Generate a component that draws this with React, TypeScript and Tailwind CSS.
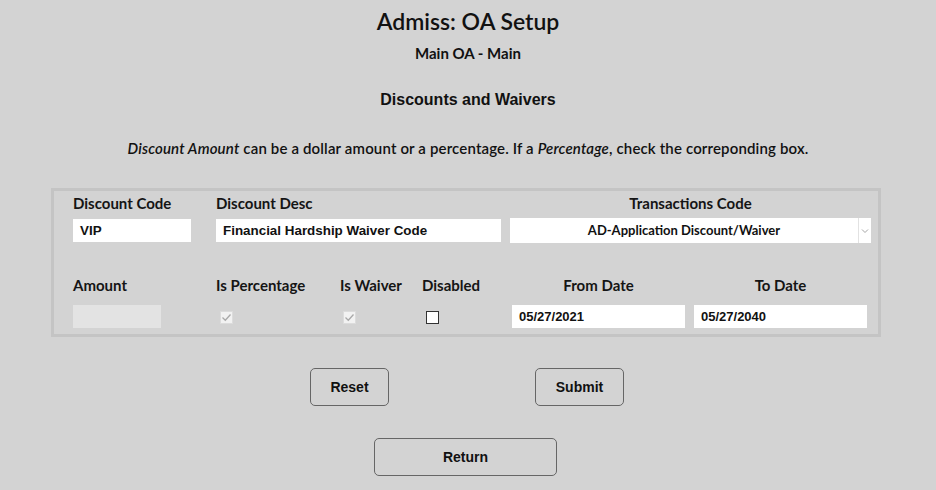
import React from 'react'

const geo = "font-['Lato','Noto_Sans',sans-serif]"
const arial = "font-['Liberation_Sans',Arial,sans-serif]"

function Label({ children, className = '' }: { children: React.ReactNode; className?: string }) {
  return (
    <div className={`${geo} text-[15px] leading-[20px] font-bold text-[#151515] ${className}`}>
      {children}
    </div>
  )
}

function TextBox({ value, className = '' }: { value: string; className?: string }) {
  return (
    <div
      className={`${arial} h-[23px] bg-white px-[7px] text-[13.4px] leading-[23px] font-bold text-[#111] ${className}`}
    >
      {value}
    </div>
  )
}

function DisabledCheck({ className = '' }: { className?: string }) {
  return (
    <span
      className={`flex h-[13px] w-[13px] items-center justify-center border border-[#dcdcdc] bg-[#f2f2f2] ${className}`}
    >
      <svg width="11" height="11" viewBox="0 0 11 11">
        <path d="M1.5 5.5 L4.3 8.2 L9.5 2.5" fill="none" stroke="#a9a9a9" strokeWidth="1.3" />
      </svg>
    </span>
  )
}

export default function App() {
  return (
    <div className="min-h-[490px] w-[936px] bg-[#d3d3d3] text-[#111]">
      <div className={`${geo} pt-[7px] text-center text-[23px] leading-[28px] font-semibold`}>
        Admiss: OA Setup
      </div>
      <div className={`${geo} mt-[8px] text-center text-[15px] leading-[20px] font-bold`}>
        Main OA - Main
      </div>
      <div className={`${arial} mt-[27px] text-center text-[16px] leading-[20px] font-bold`}>
        Discounts and Waivers
      </div>
      <div
        className={`${geo} mt-[28px] text-center text-[15px] leading-[20px] font-semibold tracking-[0.15px]`}
      >
        <i>Discount Amount</i> can be a dollar amount or a percentage. If a <i>Percentage</i>, check
        the correponding box.
      </div>

      <div className="mt-[30px] ml-[51px] w-[830px] border-[3px] border-[#c4c4c4] pt-[2px] pr-[7px] pb-[6px] pl-[19px]">
        {/* first row */}
        <div className="flex">
          <div className="w-[143px]">
            <Label>Discount Code</Label>
            <TextBox value="VIP" className="mt-[6px] w-[118px]" />
          </div>
          <div className="w-[294px]">
            <Label>Discount Desc</Label>
            <TextBox value="Financial Hardship Waiver Code" className="mt-[6px] w-[285px]" />
          </div>
          <div className="w-[361px]">
            <Label className="text-center">Transactions Code</Label>
            <div className="mt-[5px] flex h-[25px] w-[361px] bg-white">
              <div
                className={`${geo} flex-1 text-center text-[13px] leading-[25px] font-bold text-[#111]`}
              >
                AD-Application Discount/Waiver
              </div>
              <div className="flex w-[13px] items-center justify-center border-l border-[#e2e2e2]">
                <svg width="8" height="6" viewBox="0 0 8 6">
                  <path d="M1 1.5 L4 4.5 L7 1.5" fill="none" stroke="#a5a5a5" strokeWidth="1" />
                </svg>
              </div>
            </div>
          </div>
        </div>

        {/* second row */}
        <div className="mt-[32px] flex">
          <div className="w-[143px]">
            <Label>Amount</Label>
            <div className="mt-[10px] h-[23px] w-[88px] bg-[#e3e3e3]" />
          </div>
          <div className="w-[124px]">
            <Label>Is Percentage</Label>
            <DisabledCheck className="mt-[16px] ml-[4px]" />
          </div>
          <div className="w-[82px]">
            <Label>Is Waiver</Label>
            <DisabledCheck className="mt-[16px] ml-[3px]" />
          </div>
          <div className="w-[90px]">
            <Label>Disabled</Label>
            <span className="mt-[16px] ml-[4px] block h-[13px] w-[13px] border border-[#333] bg-white" />
          </div>
          <div className="w-[182px]">
            <Label className="w-[173px] text-center">From Date</Label>
            <TextBox value="05/27/2021" className="mt-[10px] w-[173px] text-[13px]" />
          </div>
          <div className="w-[173px]">
            <Label className="text-center">To Date</Label>
            <TextBox value="05/27/2040" className="mt-[10px] w-[173px] text-[13px]" />
          </div>
        </div>
      </div>

      <div className="mt-[31px] flex justify-center gap-[146px] pr-[2px]">
        <button
          className={`${arial} h-[38px] w-[79px] rounded-[5px] border border-[#666] text-[14px] font-bold text-[#111]`}
        >
          Reset
        </button>
        <button
          className={`${arial} h-[38px] w-[89px] rounded-[5px] border border-[#666] text-[14px] font-bold text-[#111]`}
        >
          Submit
        </button>
      </div>
      <div className="mt-[32px] flex justify-center pr-[5px]">
        <button
          className={`${arial} h-[38px] w-[183px] rounded-[5px] border border-[#666] text-[14px] font-bold text-[#111]`}
        >
          Return
        </button>
      </div>
    </div>
  )
}
